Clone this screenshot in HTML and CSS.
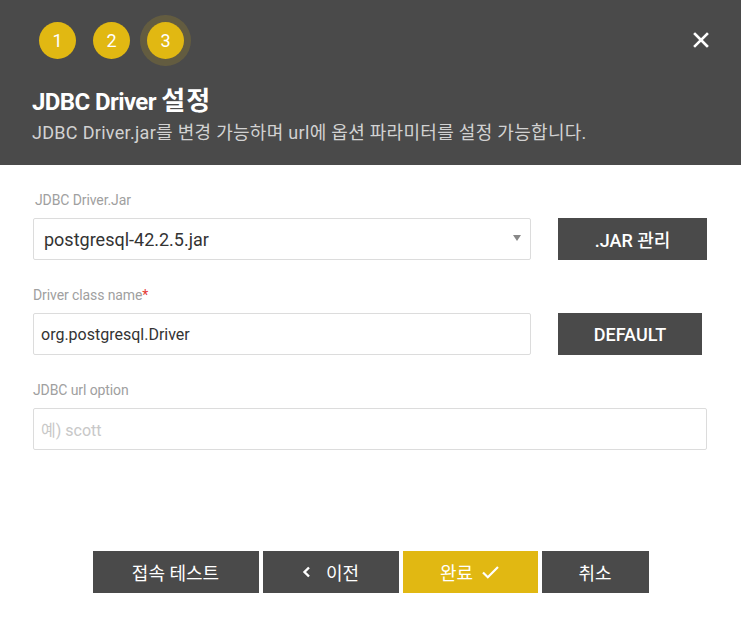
FILE: index.html
```html
<!DOCTYPE html>
<html lang="ko">
<head>
<meta charset="utf-8">
<link rel="stylesheet" href="styles.css">
</head>
<body>
<div class="modal">
  <header class="head">
    <div class="steps">
      <span class="step">1</span>
      <span class="step">2</span>
      <span class="step active">3</span>
    </div>
    <button class="close" aria-label="close">
      <svg width="16" height="16" viewBox="0 0 16 16"><path d="M2 2L14 14M14 2L2 14" stroke="#fff" stroke-width="2.6" stroke-linecap="square"/></svg>
    </button>
    <h1 class="title">JDBC Driver <span class="ko">설정</span></h1>
    <p class="sub">JDBC Driver.jar를 변경 가능하며 url에 옵션 파라미터를 설정 가능합니다.</p>
  </header>
  <main class="body">
    <div class="field">
      <label class="lbl">JDBC Driver.Jar</label>
      <div class="row">
        <div class="input select w498">postgresql-42.2.5.jar<span class="caret"></span></div>
        <button class="btn dark b149">.JAR 관리</button>
      </div>
    </div>
    <div class="field">
      <label class="lbl lbl-tight">Driver class name<span class="req">*</span></label>
      <div class="row">
        <div class="input w498">org.postgresql.Driver</div>
        <button class="btn dark b144">DEFAULT</button>
      </div>
    </div>
    <div class="field">
      <label class="lbl lbl-tight">JDBC url option</label>
      <div class="row">
        <div class="input full ph">예) scott</div>
      </div>
    </div>
  </main>
  <footer class="foot">
    <button class="btn dark fb f166">접속 테스트</button>
    <button class="btn dark fb f136"><svg class="chev" width="10" height="12" viewBox="0 0 10 12"><path d="M7 1.5L2.5 6L7 10.5" fill="none" stroke="#fff" stroke-width="2.4"/></svg>이전</button>
    <button class="btn yellow fb f135">완료<svg class="check" width="19" height="16" viewBox="0 0 19 16"><path d="M2 8.5L6.8 13.2L17 3" fill="none" stroke="#fff" stroke-width="2.2"/></svg></button>
    <button class="btn dark fb f107">취소</button>
  </footer>
</div>
</body>
</html>
```

FILE: styles.css
```css
html, body { margin: 0; padding: 0; background: #fff; }
body { font-family: Roboto, "Noto Sans CJK KR", sans-serif; width: 741px; height: 617px; overflow: hidden; }
.modal { display: flex; flex-direction: column; height: 617px; }
.head { position: relative; background: #4a4a4a; height: 165px; box-sizing: border-box; padding: 22px 32px 0 39px; }
.steps { display: flex; gap: 17px; height: 37px; }
.step { width: 37px; height: 37px; border-radius: 50%; background: #e1b812; color: #fff; font-size: 18px; display: flex; align-items: center; justify-content: center; }
.step.active { box-shadow: 0 0 0 7px rgba(225, 184, 18, 0.17); }
.close { position: absolute; right: 32px; top: 32px; background: none; border: 0; padding: 0; width: 16px; height: 16px; cursor: pointer; }
.close svg { display: block; }
.title { margin: 28px 0 0 -7px; height: 28px; font-size: 24px; line-height: 28px; font-weight: 700; color: #fff; letter-spacing: -0.6px; white-space: nowrap; }
.title .ko { font-size: 26px; letter-spacing: 1px; }
.sub { margin: 7px 0 0 -7px; font-size: 18px; line-height: 22px; color: #d2d2d2; letter-spacing: 0.3px; white-space: nowrap; }
.body { padding: 27px 34px 0 33px; display: flex; flex-direction: column; gap: 27px; }
.lbl { display: block; font-size: 14px; line-height: 17px; color: #a0a0a0; margin: 0 0 9px 2px; letter-spacing: -0.1px; }
.lbl-tight { margin-left: 0; }
.req { color: #e53935; }
.row { display: flex; align-items: center; gap: 27px; }
.input { box-sizing: border-box; height: 42px; border: 1px solid #dcdcdc; border-radius: 2px; padding: 0 7px; display: flex; align-items: center; font-size: 16px; color: #333; position: relative; }
.select { padding-left: 10px; font-size: 18px; }
.w498 { width: 498px; }
.full { width: 674px; }
.ph { color: #c8c8c8; font-size: 16px; }
.caret { position: absolute; right: 9px; top: 16px; width: 0; height: 0; border-left: 4px solid transparent; border-right: 4px solid transparent; border-top: 6px solid #888; }
.btn { border: 0; height: 42px; font-family: Roboto, "Noto Sans CJK KR", sans-serif; font-size: 18px; font-weight: 500; color: #fff; display: flex; align-items: center; justify-content: center; padding: 0; }
.dark { background: #4a4a4a; }
.yellow { background: #e1b812; }
.b149 { width: 149px; }
.b144 { width: 144px; }
.foot { display: flex; justify-content: center; gap: 4px; margin-top: 101px; }
.fb { font-weight: 400; }
.f166 { width: 166px; }
.f136 { width: 136px; }
.f135 { width: 135px; }
.f107 { width: 107px; }
.chev { margin-right: 14px; }
.check { margin-left: 8px; }
```
